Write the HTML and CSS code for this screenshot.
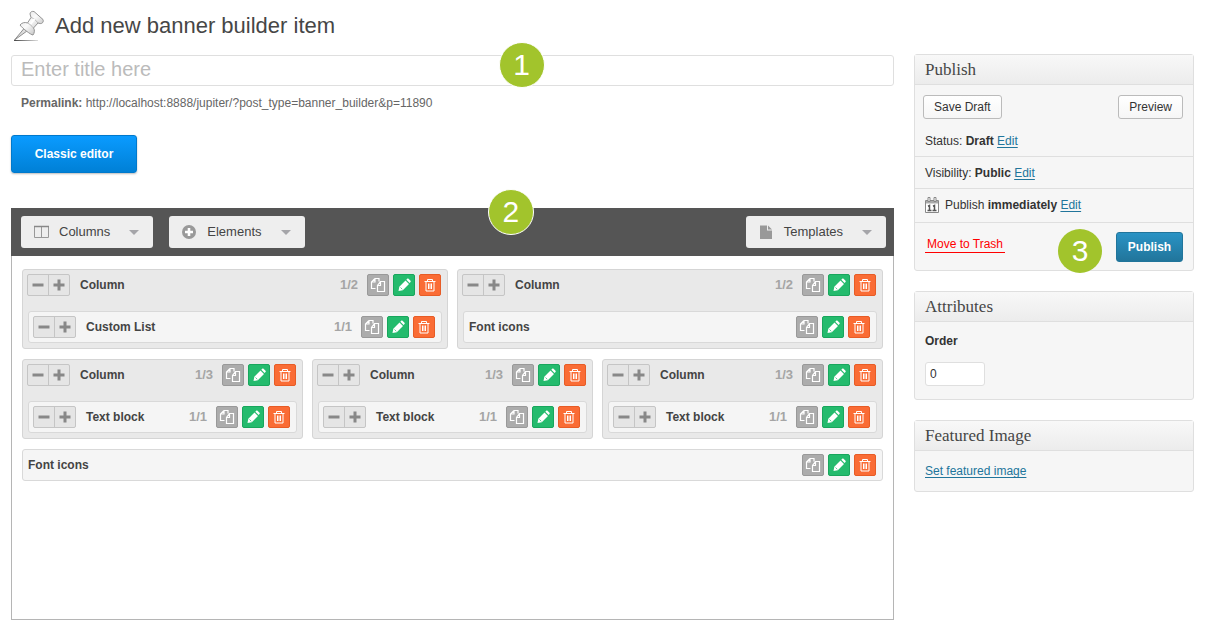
FILE: index.html
```
<!DOCTYPE html>
<html lang="en">
<head>
<meta charset="utf-8">
<title>Add new banner builder item</title>
<link rel="stylesheet" href="styles.css">
</head>
<body>
<svg class="sprite" aria-hidden="true">
  <symbol id="copy" viewBox="0 0 16 16"><path d="M5 1.500h4v3M5 1.500l-3.500 3.500v6.500h4M5 1.500v3.500h-3.500M10.500 4.500h4v10h-7v-6l3-4zM10.500 4.500v4h-3" fill="none" stroke="currentColor" stroke-width="1.200"/></symbol>
  <symbol id="pencil" viewBox="0 0 16 16"><path d="M2.500 14l.8-4.300 6.200-6.200 3.500 3.500-6.200 6.200zM10.300 2.700l.9-.9c.4-.4.900-.4 1.300 0l2 2c.4.4.4.9 0 1.300l-.9.9z" fill="currentColor"/><path d="M4.500 10.500l1.800 1.800" stroke="#24bb6d" stroke-width=".7"/></symbol>
  <symbol id="trash" viewBox="0 0 16 16"><path d="M2.500 4.500h11M5.500 4.500v-2h5v2M4 4.500v9.500h8v-9.500M6.500 6.500v5.500M8 6.500v5.500M9.500 6.500v5.500" fill="none" stroke="currentColor"/></symbol>
  <symbol id="minus" viewBox="0 0 12 12"><path d="M.5 4.500h11v3h-11z" fill="currentColor"/></symbol>
  <symbol id="plus" viewBox="0 0 12 12"><path d="M4.500.5h3v4h4v3h-4v4h-3v-4h-4v-3h4z" fill="currentColor"/></symbol>
</svg>

<header class="page-head">
  <svg class="pin" viewBox="0 0 32 32" aria-hidden="true">
    <defs>
      <linearGradient id="metal" x1="0" y1="0" x2="1" y2="1"><stop offset="0" stop-color="#ddd"/><stop offset=".45" stop-color="#fafafa"/><stop offset="1" stop-color="#aaa"/></linearGradient>
      <linearGradient id="shade" gradientUnits="userSpaceOnUse" x1="1" y1="0" x2="25" y2="0"><stop offset="0" stop-color="#444"/><stop offset="1" stop-color="#ddd"/></linearGradient>
    </defs>
    <path d="M1 30.500h24" stroke="url(#shade)"/>
    <path d="M1.500 30l9.500-11.500 3 2.500z" fill="#ddd" stroke="#777" stroke-width=".8"/>
    <path d="M17 4c0-2 2-3 4-2.500l9 8c1 2.500-1 4.500-3 4l-2-.5-4.500 5c1.500 2 1 5-.5 7-2 0-11-7-13-10 2-2.500 5-3 7.500-2l3.500-5.500z" fill="url(#metal)" stroke="#888" stroke-width=".9"/>
    <path d="M18 7.500c2 .5 5.500 3 7 5.500M14.500 13c2 1 4.500 3 6 5" fill="none" stroke="#aaa" stroke-width=".8"/>
    <path d="M17.500 14l4-5" stroke="#fff" stroke-width="2"/>
  </svg>
  <h1>Add new banner builder item</h1>
</header>

<div class="layout">
  <main class="main">
    <div class="title-field">
      <input class="title-input" type="text" placeholder="Enter title here" aria-label="Title">
      <span class="badge badge-title">1</span>
    </div>
    <p class="permalink"><strong>Permalink:</strong> http://localhost:8888/jupiter/?post_type=banner_builder&amp;p=11890</p>
    <button class="classic" type="button">Classic editor</button>

    <section class="builder">
      <span class="badge badge-builder">2</span>
      <div class="toolbar">
        <button class="menu" type="button"><svg class="menu-icon" viewBox="0 0 16 16" aria-hidden="true"><path d="M.5 2.500h14v11h-14zM7.500 3v10" fill="none" stroke="#999"/><path d="M0 2.500h15" stroke="#888" stroke-width="1.500"/></svg>Columns<span class="caret"></span></button>
        <button class="menu" type="button"><svg class="menu-icon" viewBox="0 0 16 16" aria-hidden="true"><circle cx="7" cy="8" r="7" fill="#999"/><path d="M7 4v8M3 8h8" stroke="#fff" stroke-width="2.600"/></svg>Elements<span class="caret"></span></button>
        <button class="menu menu-end" type="button"><svg class="menu-icon" viewBox="0 0 16 16" aria-hidden="true"><path d="M1 1.500h7v5h5v8.500h-12zM9 1.500l4 4h-4z" fill="#999"/></svg>Templates<span class="caret"></span></button>
      </div>
      <div class="canvas">
        <div class="row halves">
          <article class="column">
            <div class="bar">
              <span class="sizer"><button type="button" aria-label="Narrower"><svg><use href="#minus"/></svg></button><button type="button" aria-label="Wider"><svg><use href="#plus"/></svg></button></span>
              <h3>Column</h3><span class="size">1/2</span>
              <span class="actions"><button class="copy" type="button" aria-label="Duplicate"><svg><use href="#copy"/></svg></button><button class="edit" type="button" aria-label="Edit"><svg><use href="#pencil"/></svg></button><button class="delete" type="button" aria-label="Delete"><svg><use href="#trash"/></svg></button></span>
            </div>
            <div class="bar item">
              <span class="sizer"><button type="button" aria-label="Narrower"><svg><use href="#minus"/></svg></button><button type="button" aria-label="Wider"><svg><use href="#plus"/></svg></button></span>
              <h3>Custom List</h3><span class="size">1/1</span>
              <span class="actions"><button class="copy" type="button" aria-label="Duplicate"><svg><use href="#copy"/></svg></button><button class="edit" type="button" aria-label="Edit"><svg><use href="#pencil"/></svg></button><button class="delete" type="button" aria-label="Delete"><svg><use href="#trash"/></svg></button></span>
            </div>
          </article>
          <article class="column">
            <div class="bar">
              <span class="sizer"><button type="button" aria-label="Narrower"><svg><use href="#minus"/></svg></button><button type="button" aria-label="Wider"><svg><use href="#plus"/></svg></button></span>
              <h3>Column</h3><span class="size">1/2</span>
              <span class="actions"><button class="copy" type="button" aria-label="Duplicate"><svg><use href="#copy"/></svg></button><button class="edit" type="button" aria-label="Edit"><svg><use href="#pencil"/></svg></button><button class="delete" type="button" aria-label="Delete"><svg><use href="#trash"/></svg></button></span>
            </div>
            <div class="bar item plain">
              <h3>Font icons</h3>
              <span class="actions"><button class="copy" type="button" aria-label="Duplicate"><svg><use href="#copy"/></svg></button><button class="edit" type="button" aria-label="Edit"><svg><use href="#pencil"/></svg></button><button class="delete" type="button" aria-label="Delete"><svg><use href="#trash"/></svg></button></span>
            </div>
          </article>
        </div>
        <div class="row thirds">
          <article class="column">
            <div class="bar">
              <span class="sizer"><button type="button" aria-label="Narrower"><svg><use href="#minus"/></svg></button><button type="button" aria-label="Wider"><svg><use href="#plus"/></svg></button></span>
              <h3>Column</h3><span class="size">1/3</span>
              <span class="actions"><button class="copy" type="button" aria-label="Duplicate"><svg><use href="#copy"/></svg></button><button class="edit" type="button" aria-label="Edit"><svg><use href="#pencil"/></svg></button><button class="delete" type="button" aria-label="Delete"><svg><use href="#trash"/></svg></button></span>
            </div>
            <div class="bar item">
              <span class="sizer"><button type="button" aria-label="Narrower"><svg><use href="#minus"/></svg></button><button type="button" aria-label="Wider"><svg><use href="#plus"/></svg></button></span>
              <h3>Text block</h3><span class="size">1/1</span>
              <span class="actions"><button class="copy" type="button" aria-label="Duplicate"><svg><use href="#copy"/></svg></button><button class="edit" type="button" aria-label="Edit"><svg><use href="#pencil"/></svg></button><button class="delete" type="button" aria-label="Delete"><svg><use href="#trash"/></svg></button></span>
            </div>
          </article>
          <article class="column">
            <div class="bar">
              <span class="sizer"><button type="button" aria-label="Narrower"><svg><use href="#minus"/></svg></button><button type="button" aria-label="Wider"><svg><use href="#plus"/></svg></button></span>
              <h3>Column</h3><span class="size">1/3</span>
              <span class="actions"><button class="copy" type="button" aria-label="Duplicate"><svg><use href="#copy"/></svg></button><button class="edit" type="button" aria-label="Edit"><svg><use href="#pencil"/></svg></button><button class="delete" type="button" aria-label="Delete"><svg><use href="#trash"/></svg></button></span>
            </div>
            <div class="bar item">
              <span class="sizer"><button type="button" aria-label="Narrower"><svg><use href="#minus"/></svg></button><button type="button" aria-label="Wider"><svg><use href="#plus"/></svg></button></span>
              <h3>Text block</h3><span class="size">1/1</span>
              <span class="actions"><button class="copy" type="button" aria-label="Duplicate"><svg><use href="#copy"/></svg></button><button class="edit" type="button" aria-label="Edit"><svg><use href="#pencil"/></svg></button><button class="delete" type="button" aria-label="Delete"><svg><use href="#trash"/></svg></button></span>
            </div>
          </article>
          <article class="column">
            <div class="bar">
              <span class="sizer"><button type="button" aria-label="Narrower"><svg><use href="#minus"/></svg></button><button type="button" aria-label="Wider"><svg><use href="#plus"/></svg></button></span>
              <h3>Column</h3><span class="size">1/3</span>
              <span class="actions"><button class="copy" type="button" aria-label="Duplicate"><svg><use href="#copy"/></svg></button><button class="edit" type="button" aria-label="Edit"><svg><use href="#pencil"/></svg></button><button class="delete" type="button" aria-label="Delete"><svg><use href="#trash"/></svg></button></span>
            </div>
            <div class="bar item">
              <span class="sizer"><button type="button" aria-label="Narrower"><svg><use href="#minus"/></svg></button><button type="button" aria-label="Wider"><svg><use href="#plus"/></svg></button></span>
              <h3>Text block</h3><span class="size">1/1</span>
              <span class="actions"><button class="copy" type="button" aria-label="Duplicate"><svg><use href="#copy"/></svg></button><button class="edit" type="button" aria-label="Edit"><svg><use href="#pencil"/></svg></button><button class="delete" type="button" aria-label="Delete"><svg><use href="#trash"/></svg></button></span>
            </div>
          </article>
        </div>
        <div class="bar item plain">
          <h3>Font icons</h3>
          <span class="actions"><button class="copy" type="button" aria-label="Duplicate"><svg><use href="#copy"/></svg></button><button class="edit" type="button" aria-label="Edit"><svg><use href="#pencil"/></svg></button><button class="delete" type="button" aria-label="Delete"><svg><use href="#trash"/></svg></button></span>
        </div>
      </div>
    </section>
  </main>

  <aside class="sidebar">
    <section class="box">
      <h2>Publish</h2>
      <div class="drafts"><button class="btn" type="button">Save Draft</button><button class="btn" type="button">Preview</button></div>
      <p class="line">Status: <strong>Draft</strong> <a href="#status">Edit</a></p>
      <p class="line">Visibility: <strong>Public</strong> <a href="#visibility">Edit</a></p>
      <p class="line dated"><svg class="calendar" viewBox="0 0 14 16" aria-hidden="true"><path d="M.5 3.500h13v12h-13z" fill="#fff" stroke="#888"/><path d="M1 4h12v2.500h-12z" fill="#aaa"/><path d="M3 .5h2v4h-2zM9 .5h2v4h-2z" fill="#fff" stroke="#888"/><path d="M3 9.200l1.500-.7v5M2.500 13.500h4M8 9.200l1.500-.7v5M7.500 13.500h4" fill="none" stroke="#555" stroke-width="1.500"/></svg><span>Publish <strong>immediately</strong> <a href="#date">Edit</a></span></p>
      <div class="submit">
        <a class="trash-link" href="#trash-item">Move to Trash</a>
        <button class="publish" type="button">Publish</button>
        <span class="badge badge-publish">3</span>
      </div>
    </section>
    <section class="box">
      <h2>Attributes</h2>
      <div class="order"><label for="order">Order</label><input id="order" type="text" value="0"></div>
    </section>
    <section class="box">
      <h2>Featured Image</h2>
      <p class="featured"><a href="#featured">Set featured image</a></p>
    </section>
  </aside>
</div>
</body>
</html>
```
FILE: styles.css
```
* { box-sizing: border-box; }
body { margin: 0; padding: 8px 11px 12px; background: #fff; color: #333; font: 12px/16px "Liberation Sans", Arial, sans-serif; }
h1, h2, h3, p { margin: 0; }
button, input { font: inherit; color: inherit; }
button { margin: 0; padding: 0; }
svg { display: block; }
a { color: #21759b; text-underline-offset: 2px; }
.sprite { position: absolute; width: 0; height: 0; }

.page-head { display: flex; align-items: center; gap: 10px; height: 36px; padding-left: 2px; margin-bottom: 10px; }
.pin { width: 32px; height: 32px; }
h1 { font-size: 22px; line-height: 36px; font-weight: 400; color: #464646; }
.layout { display: flex; gap: 20px; align-items: flex-start; }
.main { flex: 1; min-width: 0; }

.title-field { position: relative; padding-top: 1px; }
.title-input { display: block; width: 100%; height: 31px; padding: 0 9px 3px; border: 1px solid #dfdfdf; border-radius: 3px; background: #fff; font-size: 20px; outline: 0; }
.title-input::placeholder { color: #bbb; opacity: 1; }
.permalink { padding: 9px 10px 0; margin-bottom: 24px; color: #666; }
.classic { display: block; width: 126px; height: 38px; border: 1px solid #0079cc; border-radius: 3px; background: linear-gradient(#0a9bff, #0080d6); box-shadow: 0 1px 2px #bbb; color: #fff; font-weight: 700; }

.badge { position: absolute; z-index: 1; width: 46px; height: 46px; border: 1px solid #fff; border-radius: 50%; background: #a2c42c; color: #fff; font-size: 30px; line-height: 44px; text-align: center; }
.badge-title { left: calc(50% + 46px); top: -12px; }
.badge-builder { left: 54%; top: -19px; }
.badge-publish { right: 90px; top: 5px; border-color: transparent; background-clip: padding-box; }

.builder { position: relative; margin-top: 35px; }
.toolbar { display: flex; gap: 16px; padding: 8px 8px 8px 10px; background: #555; }
.menu { display: flex; align-items: center; height: 32px; padding: 0 14px 0 13px; border: 0; border-radius: 3px; background: #eee; font-size: 13px; color: #444; }
.menu-icon { width: 16px; height: 16px; margin-right: 9px; }
.menu-end { margin-left: auto; }
.caret { margin-left: 19px; border: 5px solid transparent; border-top-color: #a5a5a9; border-bottom: 0; }
.canvas { display: flex; flex-direction: column; gap: 10px; min-height: 364px; padding: 13px 10px; border: 1px solid #b5b5b5; border-top: 0; }
.row { display: grid; gap: 9px; }
.halves { grid-template-columns: 1fr 1fr; }
.thirds { grid-template-columns: 1fr 1fr 1fr; }
.column { display: flex; flex-direction: column; gap: 15px; padding: 4px 0 5px; border: 1px solid #d5d5d5; border-radius: 3px; background: #e9e9e9; }
.bar { display: flex; align-items: center; padding: 0 6px 0 4px; }
.item { padding: 4px 6px 4px 4px; border: 1px solid #d9d9d9; border-radius: 3px; background: #f5f5f5; }
.column .item { margin: 0 5px; }
.plain { padding-left: 5px; }
.bar h3 { flex: 1; font-size: 12px; line-height: 16px; color: #444; }
.sizer { display: flex; margin-right: 10px; border: 1px solid #c5c5c5; border-radius: 2px; background: #e5e5e5; }
.sizer button { display: grid; place-items: center; width: 20px; height: 20px; border: 0; background: none; color: #888; }
.sizer button + button { width: 21px; border-left: 1px solid #c5c5c5; }
.sizer svg { width: 12px; height: 12px; }
.size { margin-right: 9px; font-size: 13px; font-weight: 700; color: #a5a5a5; }
.actions { display: flex; gap: 4px; }
.actions button { display: grid; place-items: center; width: 22px; height: 22px; border: 1px solid; border-radius: 2px; }
.actions svg { width: 16px; height: 16px; color: #fff; }
.actions .copy { background: #acacac; border-color: #999; }
.actions .edit { background: #24bb6d; border-color: #18a65c; }
.actions .delete { background: #fa6c35; border-color: #e75c26; }

.sidebar { display: flex; flex-direction: column; gap: 20px; width: 280px; }
.box { border: 1px solid #dfdfdf; border-radius: 3px; background: #f6f6f6; }
.box h2 { padding: 0 10px; border-bottom: 1px solid #dfdfdf; background: linear-gradient(#f8f8f8, #ececec); font: 400 17px/29px "Liberation Serif", Georgia, serif; color: #464646; }
.drafts { display: flex; justify-content: space-between; padding: 10px 10px 6px 8px; }
.btn { height: 24px; padding: 0 10px; border: 1px solid #bbb; border-radius: 3px; background: linear-gradient(#fff, #f6f6f6); }
.line { padding: 8px 10px 7px; border-bottom: 1px solid #dfdfdf; }
.dated { display: flex; align-items: center; gap: 6px; padding-bottom: 9px; }
.calendar { width: 14px; height: 16px; }
.submit { position: relative; display: flex; justify-content: space-between; align-items: center; padding: 9px 10px 8px; }
.trash-link { padding: 0 2px; border-bottom: 1px solid #f00; color: #f00; text-decoration: none; margin-bottom: 5px; }
.publish { width: 67px; height: 30px; border: 1px solid #21759b; border-radius: 3px; background: linear-gradient(#2a93c5, #21759b); color: #fff; font-weight: 700; }
.order { display: flex; flex-direction: column; gap: 13px; padding: 11px 10px 13px; font-weight: 700; }
.order input { width: 60px; height: 24px; padding: 0 4px; border: 1px solid #dfdfdf; border-radius: 3px; background: #fff; font-weight: 400; }
.featured { padding: 12px 10px; }
```
